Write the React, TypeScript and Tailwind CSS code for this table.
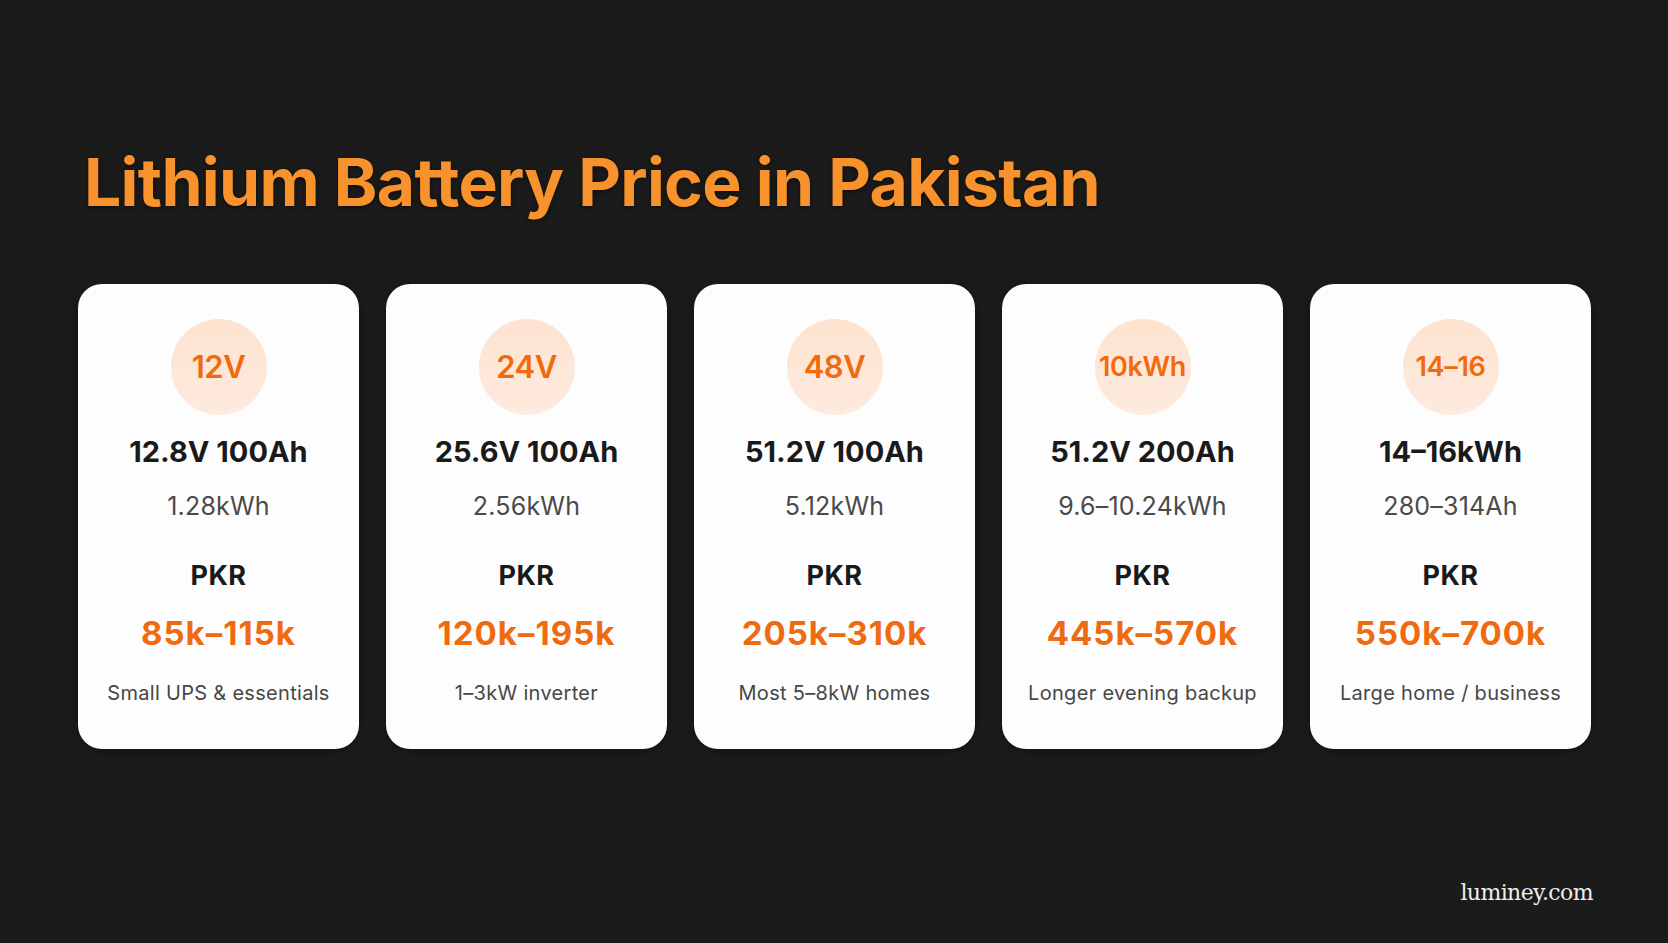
const batteries = [
  { badge: "12V", small: false, spec: "12.8V 100Ah", capacity: "1.28kWh", price: "85k–115k", use: "Small UPS & essentials" },
  { badge: "24V", small: false, spec: "25.6V 100Ah", capacity: "2.56kWh", price: "120k–195k", use: "1–3kW inverter" },
  { badge: "48V", small: false, spec: "51.2V 100Ah", capacity: "5.12kWh", price: "205k–310k", use: "Most 5–8kW homes" },
  { badge: "10kWh", small: true, spec: "51.2V 200Ah", capacity: "9.6–10.24kWh", price: "445k–570k", use: "Longer evening backup" },
  { badge: "14–16", small: true, spec: "14–16kWh", capacity: "280–314Ah", price: "550k–700k", use: "Large home / business" },
];

function PriceCard({ item }: { item: (typeof batteries)[number] }) {
  return (
    <div className="flex h-[465px] w-[281px] shrink-0 flex-col items-center rounded-[24px] bg-[#fdfdfd] pt-[35px] shadow-[0_2px_10px_rgba(0,0,0,0.35)]">
      <div className="flex h-[96px] w-[96px] items-center justify-center rounded-full bg-gradient-to-b from-[#fde3cf] to-[#fdebdf]">
        <span
          className={
            item.small
              ? "text-[27px] leading-[32px] font-semibold tracking-[-0.3px] text-[#f26a0e]"
              : "text-[31px] leading-[36px] font-semibold tracking-[-0.5px] text-[#f26a0e]"
          }
        >
          {item.badge}
        </span>
      </div>
      <div className="mt-[20px] text-[29px] leading-[34px] font-bold text-[#1a1a1a]">{item.spec}</div>
      <div className="mt-[22px] text-[25px] leading-[30px] font-normal tracking-[0.2px] text-[#4a4a4a]">
        {item.capacity}
      </div>
      <div className="mt-[39px] text-[27px] leading-[32px] font-bold tracking-[0.4px] text-[#1a1a1a]">PKR</div>
      <div className="mt-[22px] text-[33px] leading-[38px] font-bold tracking-[1px] text-[#f06a10]">
        {item.price}
      </div>
      <div className="mt-[28px] text-[20px] leading-[26px] font-normal tracking-[0.3px] text-[#474747]">
        {item.use}
      </div>
    </div>
  );
}

export default function App() {
  return (
    <div className="flex h-[943px] w-full flex-col bg-[#1c1b1c] font-['Inter','Noto_Sans',sans-serif]">
      <h1 className="mt-[142px] pl-[84px] text-[66px] leading-[80px] font-bold tracking-[-0.7px] text-[#f7922c] [text-shadow:0_1px_4px_rgba(0,0,0,0.6)]">
        Lithium Battery Price in Pakistan
      </h1>
      <div className="mt-[62px] flex gap-[27px] pl-[78px]">
        {batteries.map((item) => (
          <PriceCard key={item.badge} item={item} />
        ))}
      </div>
      <div className="mt-[130px] flex justify-end pr-[75px]">
        <span className="font-['DejaVu_Serif',serif] text-[22px] leading-[28px] tracking-[-0.6px] text-[#eeeeee]">
          luminey.com
        </span>
      </div>
    </div>
  );
}
